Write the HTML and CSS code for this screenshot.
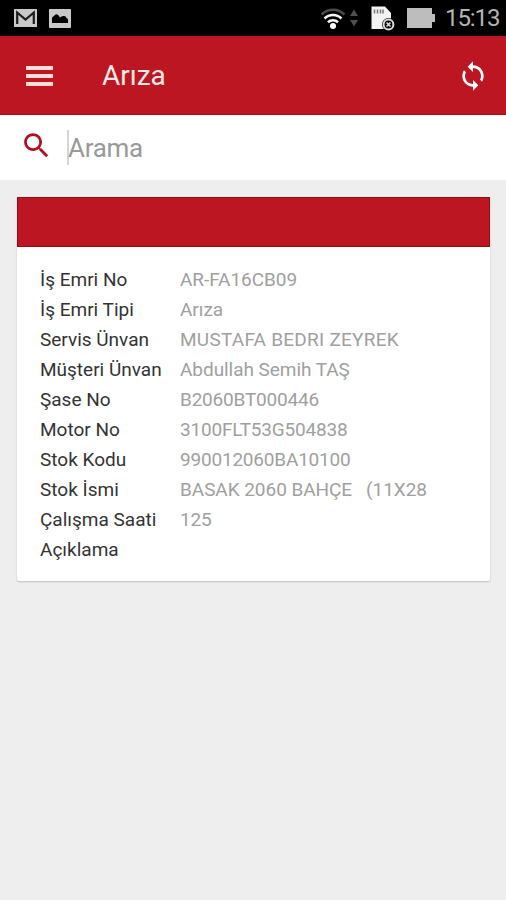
FILE: index.html
```
<!DOCTYPE html>
<html lang="tr">
<head>
    <meta charset="UTF-8">
    <meta name="viewport" content="width=device-width, initial-scale=1.0">
    <title>Arıza</title>
    <link rel="stylesheet" href="styles.css">
</head>
<body>

    <!-- Status bar -->
    <div class="statusbar">
        <svg class="mail" width="23" height="18" viewBox="0 0 23 18">
            <rect width="23" height="18" fill="#c9c9c9"/>
            <path d="M3.2 15V3.500L11.500 10.500L19.800 3.500V15" fill="none" stroke="#1c1c1c" stroke-width="2.200"/>
        </svg>
        <svg class="photo" width="22" height="19" viewBox="0 0 22 19">
            <rect width="22" height="19" rx="1" fill="#c9c9c9"/>
            <path d="M3 14V9Q3.500 7.500 5 7Q6.500 4.500 8.500 5.500Q10 6.500 11 8.500Q13 6.500 15 7Q17 7 17.500 9Q19 9.500 19 11V14Z" fill="#000"/>
        </svg>
        <svg class="wifi" width="26" height="23" viewBox="0 0 26 23">
            <path d="M1.500 7.500A16.300 16.300 0 0 1 24.500 7.500" fill="none" stroke="#4c4c4c" stroke-width="2.500"/>
            <path d="M4.500 11.500A12 12 0 0 1 21.500 11.500M8 15.300A7.200 7.200 0 0 1 18 15.300" fill="none" stroke="#f5f5f5" stroke-width="2.600"/>
            <circle cx="13" cy="19" r="3" fill="#fff"/>
        </svg>
        <svg class="traffic" width="8" height="18" viewBox="0 0 8 18">
            <path d="M4 0.500L8 7H0ZM4 17.500L8 11H0Z" fill="#505050"/>
        </svg>
        <svg class="sdcard" width="24" height="25" viewBox="0 0 24 25">
            <path d="M0.500 0.500H14L20 7V23H0.500Z" fill="#f3f3f3"/>
            <path d="M3.500 3.500V7.500M6.500 3.500V7.500M9.500 3.500V7.500M12 3.500V7.500" stroke="#777" stroke-width="1.500"/>
            <circle cx="17.500" cy="18.500" r="6.500" fill="#000"/>
            <circle cx="17.500" cy="18.500" r="4.900" fill="none" stroke="#ddd" stroke-width="2"/>
            <path d="M15.500 16.500L19.500 20.500M19.500 16.500L15.500 20.500" stroke="#ddd" stroke-width="1.700"/>
        </svg>
        <svg class="battery" width="28" height="20" viewBox="0 0 28 20">
            <path d="M0 0H25V6H28V14H25V20H0Z" fill="#bdbdbd"/>
        </svg>
        <span class="clock">15:13</span>
    </div>

    <!-- Toolbar -->
    <header class="toolbar">
        <svg class="menu" width="27" height="20" viewBox="0 0 27 20">
            <path d="M0 2H27M0 10H27M0 18H27" stroke="#fbdcd9" stroke-width="3.800"/>
        </svg>
        <h1>Arıza</h1>
        <svg class="sync" width="32" height="32" viewBox="0 0 24 24">
            <path fill="#fff" d="M12 4V1L8 5l4 4V6c3.310 0 6 2.690 6 6 0 1.010-.25 1.970-.7 2.800l1.460 1.460C19.540 15.030 20 13.570 20 12c0-4.420-3.580-8-8-8zm0 14c-3.310 0-6-2.690-6-6 0-1.010.25-1.970.7-2.800L5.240 7.740C4.460 8.970 4 10.430 4 12c0 4.420 3.580 8 8 8v3l4-4-4-4v3z"/>
        </svg>
    </header>

    <!-- Search -->
    <div class="search">
        <svg width="33" height="33" viewBox="0 0 24 24">
            <path fill="#b10f20" d="M15.500 14h-.79l-.28-.27C15.410 12.590 16 11.110 16 9.500 16 5.910 13.090 3 9.500 3S3 5.910 3 9.500 5.910 16 9.500 16c1.610 0 3.090-.59 4.230-1.570l.27.28v.79l5 4.990L20.490 19l-4.990-5zm-6 0C7.010 14 5 11.990 5 9.500S7.010 5 9.500 5 14 7.010 14 9.500 11.990 14 9.500 14z"/>
        </svg>
        <span class="cursor"></span>
        <span class="placeholder">Arama</span>
    </div>

    <!-- Work order card -->
    <div class="card">
        <div class="card-header"></div>
        <dl class="details">
            <dt>İş Emri No</dt><dd>AR-FA16CB09</dd>
            <dt>İş Emri Tipi</dt><dd>Arıza</dd>
            <dt>Servis Ünvan</dt><dd class="customer">MUSTAFA BEDRI ZEYREK</dd>
            <dt>Müşteri Ünvan</dt><dd>Abdullah Semih TAŞ</dd>
            <dt>Şase No</dt><dd class="code">B2060BT000446</dd>
            <dt>Motor No</dt><dd class="code">3100FLT53G504838</dd>
            <dt>Stok Kodu</dt><dd class="code">990012060BA10100</dd>
            <dt>Stok İsmi</dt><dd>BASAK 2060 BAHÇE   (11X28</dd>
            <dt>Çalışma Saati</dt><dd class="code">125</dd>
            <dt>Açıklama</dt><dd></dd>
        </dl>
    </div>

</body>
</html>
```
FILE: styles.css
```
* {
    box-sizing: border-box;
}
body {
    margin: 0;
    min-height: 100vh;
    background-color: #eeeeee;
    font-family: Roboto, "Liberation Sans", sans-serif;
}
svg {
    display: block;
    flex: none;
}
.statusbar {
    display: flex;
    align-items: center;
    height: 36px;
    padding: 0 8px 0 14px;
    background-color: #000;
}
.photo {
    margin-left: 12px;
}
.wifi {
    margin-left: auto;
}
.traffic {
    margin-left: 4px;
}
.sdcard {
    margin-left: 13px;
}
.battery {
    margin-left: 12px;
}
.clock {
    width: 53px;
    margin-left: 10px;
    color: #b4b4b4;
    font-size: 24px;
    line-height: 36px;
    letter-spacing: -1.1px;
    white-space: nowrap;
}
.toolbar {
    display: flex;
    align-items: center;
    height: 79px;
    padding: 1px 17px 0 26px;
    background-color: #bb1621;
    border-bottom: 1px solid #a30d17;
}
.toolbar h1 {
    margin: 0 auto 0 49px;
    color: #fde9e7;
    font-size: 28px;
    font-weight: 400;
}
.search {
    display: flex;
    align-items: center;
    height: 65px;
    padding-left: 20px;
    background-color: #fff;
}
.search svg {
    margin-bottom: 5px;
}
.cursor {
    width: 2px;
    height: 35px;
    margin-left: 14px;
    background-color: #d6d6d6;
}
.placeholder {
    margin-left: -1px;
    color: #999;
    font-size: 26px;
    letter-spacing: -0.3px;
}
.card {
    width: 473px;
    height: 384px;
    margin: 17px 0 0 17px;
    background-color: #fff;
    border-radius: 2px;
    box-shadow: 0 1px 2px rgba(0, 0, 0, 0.2);
}
.card-header {
    height: 50px;
    background-color: #bb1621;
    border: 1px solid #980a15;
}
.details {
    display: grid;
    grid-template-columns: 141px 1fr;
    grid-auto-rows: 30px;
    margin: 0;
    padding: 18px 0 0 23px;
    font-size: 19px;
    line-height: 30px;
    white-space: pre;
}
.details dt {
    color: #333;
}
.details dd {
    margin: 0 0 0 -1px;
    color: #a0a0a0;
    letter-spacing: -0.05px;
}
.details .customer {
    letter-spacing: 0.25px;
}
.details .code {
    letter-spacing: -0.2px;
}
```
